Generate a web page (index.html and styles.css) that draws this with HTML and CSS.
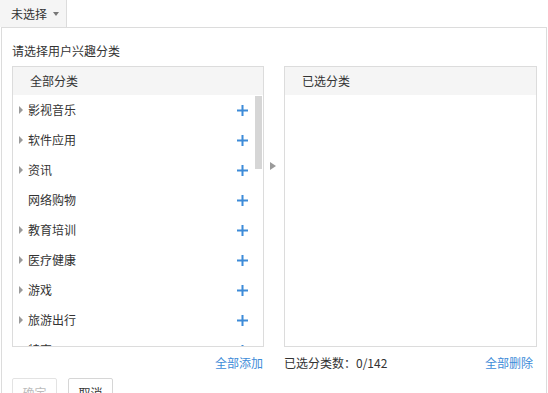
FILE: index.html
```html
<!DOCTYPE html>
<html lang="zh-CN">
<head>
<meta charset="utf-8">
<title>兴趣分类</title>
<link rel="stylesheet" href="styles.css">
</head>
<body>
<div class="picker">
  <div class="trigger">未选择<span class="caret"></span></div>
  <div class="panel">
    <div class="title">请选择用户兴趣分类</div>
    <div class="columns">
      <div class="col">
        <div class="box">
          <div class="box-head">全部分类</div>
          <div class="box-body">
            <div class="list">
              <div class="row"><span class="arr"></span><span class="name">影视音乐</span><svg class="plus" viewBox="0 0 12 12"><path d="M6 0v12M0 6h12"/></svg></div>
              <div class="row"><span class="arr"></span><span class="name">软件应用</span><svg class="plus" viewBox="0 0 12 12"><path d="M6 0v12M0 6h12"/></svg></div>
              <div class="row"><span class="arr"></span><span class="name">资讯</span><svg class="plus" viewBox="0 0 12 12"><path d="M6 0v12M0 6h12"/></svg></div>
              <div class="row"><span class="arr none"></span><span class="name">网络购物</span><svg class="plus" viewBox="0 0 12 12"><path d="M6 0v12M0 6h12"/></svg></div>
              <div class="row"><span class="arr"></span><span class="name">教育培训</span><svg class="plus" viewBox="0 0 12 12"><path d="M6 0v12M0 6h12"/></svg></div>
              <div class="row"><span class="arr"></span><span class="name">医疗健康</span><svg class="plus" viewBox="0 0 12 12"><path d="M6 0v12M0 6h12"/></svg></div>
              <div class="row"><span class="arr"></span><span class="name">游戏</span><svg class="plus" viewBox="0 0 12 12"><path d="M6 0v12M0 6h12"/></svg></div>
              <div class="row"><span class="arr"></span><span class="name">旅游出行</span><svg class="plus" viewBox="0 0 12 12"><path d="M6 0v12M0 6h12"/></svg></div>
              <div class="row"><span class="arr"></span><span class="name">特惠</span><svg class="plus" viewBox="0 0 12 12"><path d="M6 0v12M0 6h12"/></svg></div>
            </div>
            <div class="scroll"><div class="thumb"></div></div>
          </div>
        </div>
        <div class="foot foot-left"><a class="link">全部添加</a></div>
      </div>
      <div class="mid"><span class="mid-arr"></span></div>
      <div class="col col-right">
        <div class="box">
          <div class="box-head">已选分类</div>
          <div class="box-body"></div>
        </div>
        <div class="foot foot-right"><span>已选分类数：0/142</span><a class="link">全部删除</a></div>
      </div>
    </div>
    <div class="actions">
      <button class="btn disabled">确定</button>
      <button class="btn">取消</button>
    </div>
  </div>
</div>
</body>
</html>
```

FILE: styles.css
```css
html, body {
  margin: 0;
  padding: 0;
  background: #fff;
}
body {
  font-family: "Noto Sans CJK SC", "Microsoft YaHei", sans-serif;
  font-size: 12px;
  color: #333;
}
.picker {
  width: 548px;
}
.trigger {
  box-sizing: border-box;
  width: 67px;
  height: 27px;
  background: #f5f5f5;
  border-right: 1px solid #dcdcdc;
  padding-left: 11px;
  line-height: 27px;
  display: flex;
  align-items: center;
}
.caret {
  margin-left: 6px;
  margin-top: 1px;
  width: 0;
  height: 0;
  border-left: 3.5px solid transparent;
  border-right: 3.5px solid transparent;
  border-top: 4px solid #777;
}
.panel {
  box-sizing: border-box;
  margin-left: 1px;
  width: 546px;
  border: 1px solid #dcdcdc;
  border-bottom: none;
  padding: 0 9px 20px 10px;
}
.title {
  margin-top: 13px;
  line-height: 20px;
  height: 20px;
}
.columns {
  display: flex;
  margin-top: 5px;
}
.col {
  width: 252px;
  display: flex;
  flex-direction: column;
}
.col-right {
  width: 253px;
}
.mid {
  width: 20px;
  padding-top: 96px;
  padding-left: 6px;
  box-sizing: border-box;
}
.mid-arr {
  display: block;
  width: 0;
  height: 0;
  border-top: 4px solid transparent;
  border-bottom: 4px solid transparent;
  border-left: 6px solid #9a9a9a;
}
.box {
  box-sizing: border-box;
  height: 281px;
  border: 1px solid #dcdcdc;
  display: flex;
  flex-direction: column;
}
.box-head {
  height: 28px;
  line-height: 28px;
  background: #f5f5f5;
  padding-left: 17px;
  flex: none;
}
.box-body {
  flex: 1;
  min-height: 0;
  display: flex;
  overflow: hidden;
}
.list {
  flex: 1;
  min-width: 0;
  overflow: hidden;
}
.scroll {
  flex: none;
  width: 8px;
  padding-top: 1px;
}
.thumb {
  width: 7px;
  height: 73px;
  background: #d6d6d6;
}
.row {
  height: 30px;
  display: flex;
  align-items: center;
  padding-left: 6px;
  padding-right: 7px;
}
.arr {
  width: 0;
  height: 0;
  border-top: 4px solid transparent;
  border-bottom: 4px solid transparent;
  border-left: 4px solid #9a9a9a;
  margin-right: 5px;
}
.arr.none {
  border-left-color: transparent;
}
.name {
  flex: 1;
  line-height: 20px;
}
.plus {
  width: 11px;
  height: 11px;
  stroke: #3d8bd8;
  stroke-width: 2.2;
  fill: none;
}
.foot {
  height: 20px;
  line-height: 20px;
  margin-top: 6px;
  display: flex;
}
.foot-left {
  justify-content: flex-end;
  padding-right: 1px;
}
.foot-right {
  justify-content: space-between;
  padding-right: 4px;
}
.link {
  color: #3d8bd8;
  cursor: pointer;
}
.actions {
  display: flex;
  gap: 11px;
  margin-top: 5px;
}
.btn {
  box-sizing: border-box;
  width: 45px;
  height: 28px;
  border: 1px solid #d6d6d6;
  background: #fff;
  border-radius: 2px;
  font-family: inherit;
  font-size: 12px;
  color: #333;
  padding: 0;
}
.btn.disabled {
  color: #bbb;
  border-color: #e3e3e3;
}
```
